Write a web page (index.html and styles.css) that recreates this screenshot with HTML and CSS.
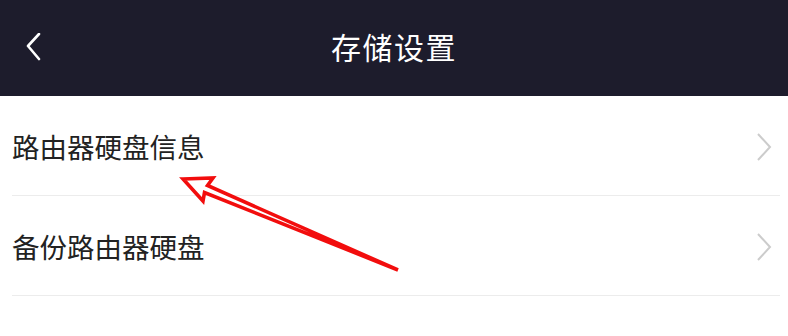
FILE: index.html
```html
<!DOCTYPE html>
<html lang="zh-CN">
<head>
<meta charset="utf-8">
<title>存储设置</title>
<link rel="stylesheet" href="styles.css">
</head>
<body>
<div class="page">
  <header class="topbar">
    <span class="back">
      <svg width="16" height="28" viewBox="0 0 16 28"><polyline points="13,1 2,13 13,26" fill="none" stroke="#ffffff" stroke-width="2.6" stroke-linecap="round" stroke-linejoin="round"/></svg>
    </span>
    <h1 class="title">存储设置</h1>
  </header>
  <ul class="list">
    <li class="item">
      <span class="label">路由器硬盘信息</span>
      <svg class="chev" width="16" height="30" viewBox="0 0 16 30"><polyline points="2,2 14,15 2,28" fill="none" stroke="#cccccc" stroke-width="2"/></svg>
    </li>
    <li class="item">
      <span class="label">备份路由器硬盘</span>
      <svg class="chev" width="16" height="30" viewBox="0 0 16 30"><polyline points="2,2 14,15 2,28" fill="none" stroke="#cccccc" stroke-width="2"/></svg>
    </li>
  </ul>
  <svg class="annot" width="788" height="336" viewBox="0 0 788 336">
    <polygon points="183,179 213,178 207.5,185.5 398,270 204.5,192.5 203,201" fill="#ffffff" stroke="#f20d0d" stroke-width="3.6" stroke-linejoin="miter"/>
  </svg>
</div>
</body>
</html>
```
FILE: styles.css
```css
* { box-sizing: border-box; }
html, body { margin: 0; padding: 0; background: #ffffff; }
body {
  font-family: "Noto Sans CJK SC", "Noto Sans", sans-serif;
  width: 788px;
  height: 336px;
  overflow: hidden;
}
.page { position: relative; width: 788px; height: 336px; }
.topbar {
  height: 96px;
  background: #1d1c2c;
  display: flex;
  align-items: center;
  justify-content: center;
  position: relative;
}
.back {
  position: absolute;
  left: 26px;
  top: 33px;
  width: 16px;
  height: 28px;
  display: block;
}
.back svg { display: block; }
.title {
  margin: 0;
  color: #ffffff;
  font-size: 30px;
  font-weight: 400;
  letter-spacing: 1.5px;
  line-height: 1;
  margin-top: -4px;
}
.list { list-style: none; margin: 0; padding: 0 8px 0 12px; }
.item {
  height: 100px;
  display: flex;
  align-items: center;
  justify-content: space-between;
  border-bottom: 1px solid #ececec;
  padding-right: 8px;
}
.label {
  font-size: 27.5px;
  color: #222222;
  line-height: 1;
  margin-top: 2px;
}
.chev { display: block; margin-top: 2px; }
.annot { position: absolute; left: 0; top: 0; pointer-events: none; }
```
